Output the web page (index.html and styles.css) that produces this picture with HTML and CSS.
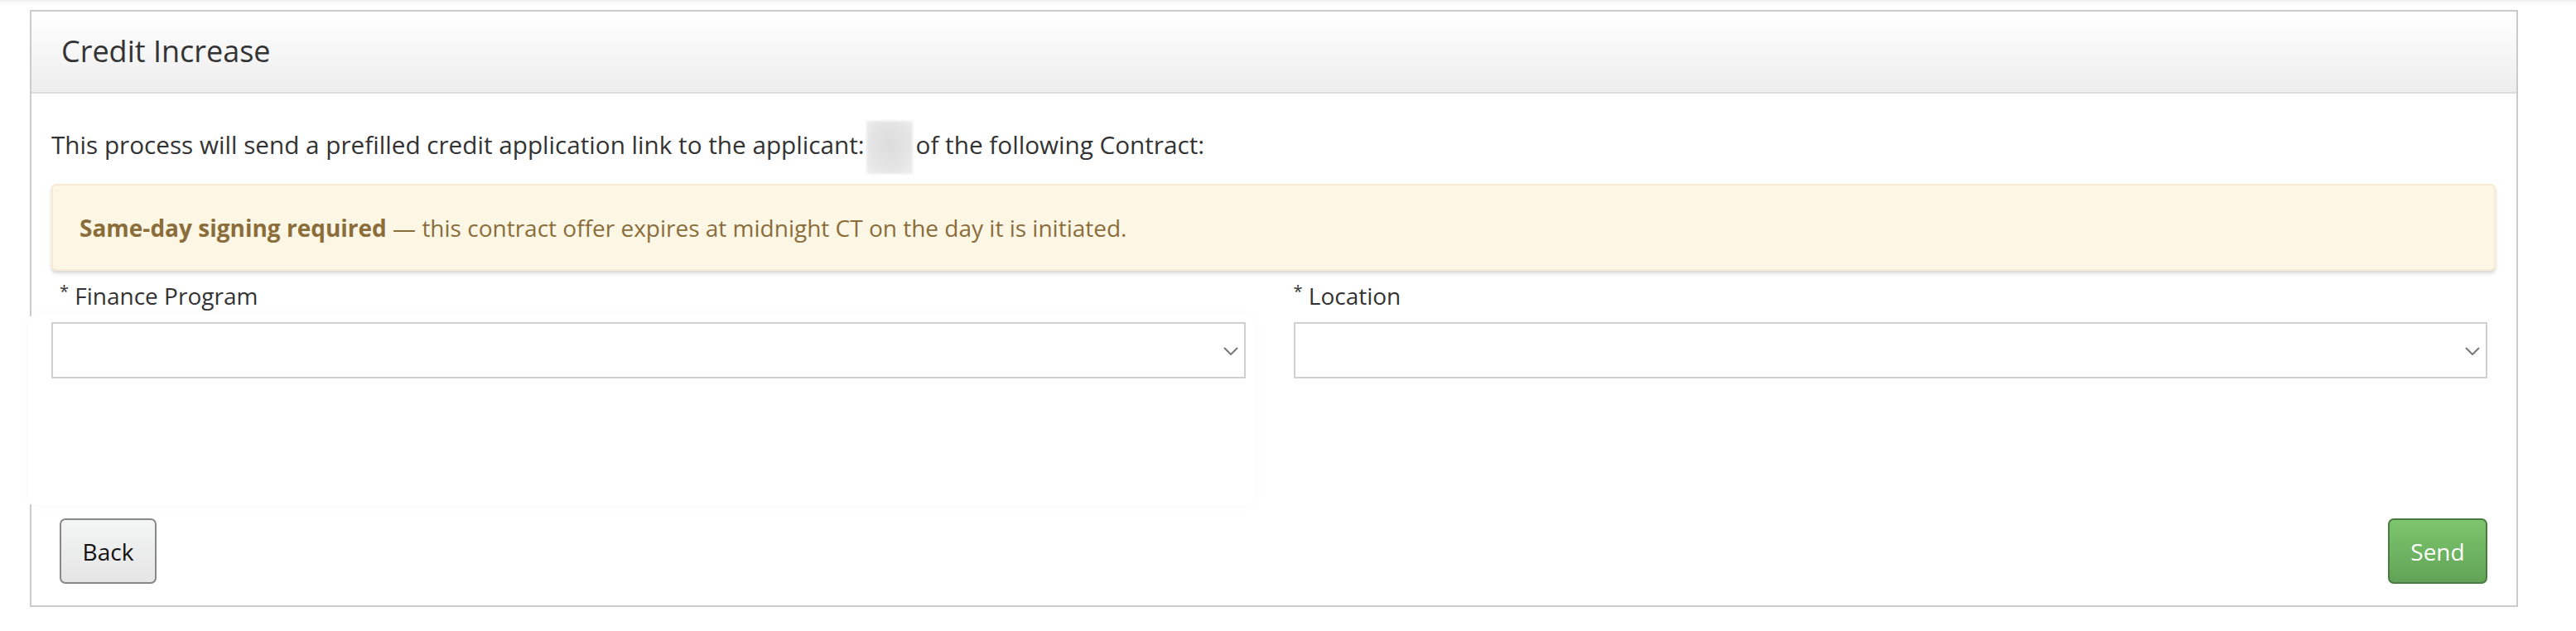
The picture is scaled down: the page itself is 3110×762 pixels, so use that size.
FILE: index.html
```html
<!DOCTYPE html>
<html lang="en">
<head>
<meta charset="utf-8">
<title>Credit Increase</title>
<link rel="stylesheet" href="styles.css">
</head>
<body>
<div class="topline"></div>
<section class="panel">
  <header class="panel-head">
    <h1 class="panel-title">Credit Increase</h1>
  </header>
  <div class="panel-body">
    <p class="intro">This process will send a prefilled credit application link to the applicant:<span class="redact"></span>of the following Contract:</p>
    <div class="alert"><strong>Same-day signing required</strong> — this contract offer expires at midnight CT on the day it is initiated.</div>
    <div class="form-row">
      <div class="field">
        <label class="field-label field-label--indent"><span class="req">*</span> Finance Program</label>
        <div class="select">
          <svg class="chev" viewBox="0 0 18 10" width="18" height="10"><path d="M1 1 L9 9 L17 1" fill="none" stroke="#777" stroke-width="2"/></svg>
        </div>
      </div>
      <div class="field">
        <label class="field-label"><span class="req">*</span> Location</label>
        <div class="select">
          <svg class="chev" viewBox="0 0 18 10" width="18" height="10"><path d="M1 1 L9 9 L17 1" fill="none" stroke="#777" stroke-width="2"/></svg>
        </div>
      </div>
    </div>
    <div class="actions">
      <button class="btn btn-default">Back</button>
      <button class="btn btn-success">Send</button>
    </div>
  </div>
</section>
<div class="ghost"></div>
</body>
</html>
```

FILE: styles.css
```css
html, body {
  margin: 0;
  padding: 0;
  background: #fff;
}
body {
  font-family: "Open Sans", "Liberation Sans", sans-serif;
  font-size: 28px;
  line-height: 40px;
  color: #333;
  position: relative;
  height: 762px;
  overflow: hidden;
}
.topline {
  height: 8px;
  margin-bottom: 4px;
  background: linear-gradient(#f0f0f0, #fbfbfb 40%, #fff);
}
.panel {
  position: relative;
  box-sizing: border-box;
  margin-left: 36px;
  width: 3004px;
  height: 721px;
  border: 2px solid #cbcbcb;
  background: #fff;
}
.panel-head {
  box-sizing: border-box;
  height: 99px;
  border-bottom: 2px solid #dcdcdc;
  background: linear-gradient(#ffffff, #ededed);
  display: flex;
  align-items: center;
  padding-left: 36px;
}
.panel-title {
  margin: 0;
  font-size: 36px;
  font-weight: 400;
  line-height: 50px;
  color: #333;
  position: relative;
  top: -1px;
}
.panel-body {
  padding: 42px 25px 0 24px;
}
.intro {
  margin: 0 0 27px;
  font-size: 29.7px;
}
.redact {
  display: inline-block;
  width: 56px;
  height: 64px;
  margin: -9px 4px -15px 2px;
  vertical-align: top;
  background: radial-gradient(ellipse at 50% 45%, #dcdcdc 0%, #e4e4e4 55%, #efefef 100%);
  filter: blur(1.5px);
}
.alert {
  box-sizing: border-box;
  height: 105px;
  padding: 31px 30px 0 32px;
  background: #fcf6e4;
  border: 2px solid #f7ead0;
  border-radius: 6px;
  box-shadow: 0 3px 4px rgba(0, 0, 0, 0.16);
  color: #8a6d3b;
}
.alert strong {
  font-weight: 700;
}
.form-row {
  display: grid;
  grid-template-columns: 1fr 1fr;
  column-gap: 58px;
  padding-right: 10px;
  margin-top: 10px;
  position: relative;
  z-index: 2;
}
.field-label {
  display: block;
  margin-bottom: 8px;
  color: #333;
}
.field-label--indent {
  padding-left: 10px;
}
.req {
  font-size: 20px;
  position: relative;
  top: -9px;
}
.select {
  box-sizing: border-box;
  height: 68px;
  border: 2px solid #d0d0d0;
  background: #fff;
  display: flex;
  align-items: center;
  justify-content: flex-end;
  padding-right: 7px;
}
.chev {
  display: block;
  width: 18px;
  height: 10px;
  margin-top: 2px;
}
.actions {
  display: flex;
  justify-content: space-between;
  margin-top: 169px;
  padding: 0 10px;
  position: relative;
  z-index: 2;
}
.btn {
  box-sizing: border-box;
  height: 79px;
  border-radius: 7px;
  font-family: "Open Sans", "Liberation Sans", sans-serif;
  font-size: 28px;
  line-height: 40px;
  padding: 0;
  cursor: pointer;
}
.btn-default {
  width: 117px;
  border: 2px solid #888;
  background: linear-gradient(#f4f5f5, #e5e5e5);
  color: #111;
}
.btn-success {
  width: 120px;
  border: 2px solid #4a7c42;
  background: linear-gradient(#7cc66d, #62a357);
  color: #fff;
}
.ghost {
  position: absolute;
  left: 34px;
  top: 382px;
  width: 1480px;
  height: 227px;
  background: #fff;
  box-shadow: 0 0 18px rgba(0, 0, 0, 0.025);
  z-index: 1;
}
```
